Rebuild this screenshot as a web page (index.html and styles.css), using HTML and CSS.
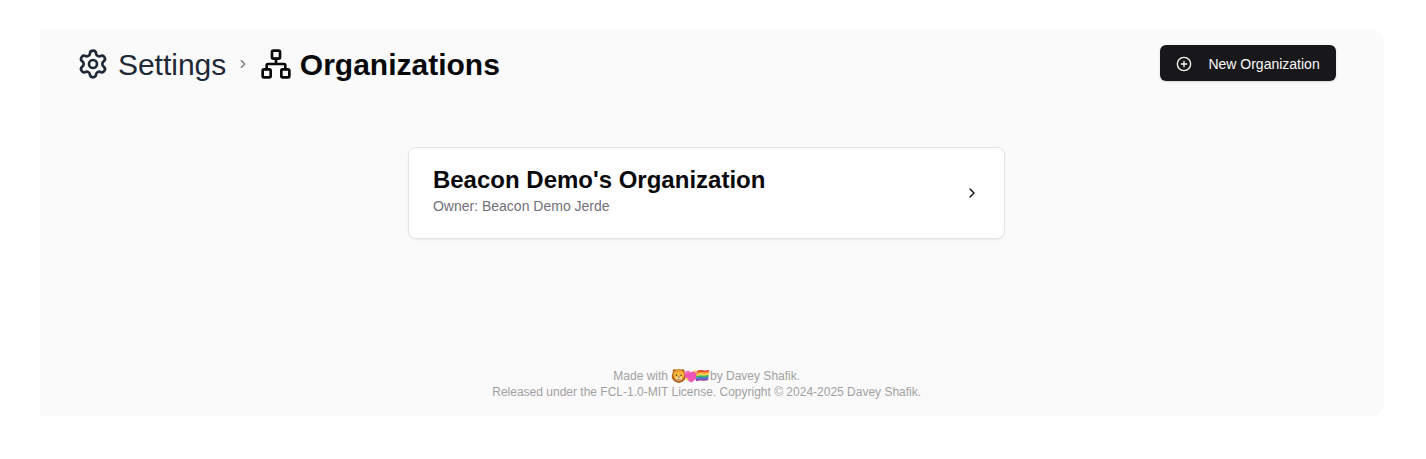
FILE: index.html
```html
<!DOCTYPE html>
<html lang="en">
<head>
<meta charset="utf-8">
<title>Organizations</title>
<link rel="stylesheet" href="styles.css">
</head>
<body>
<div class="panel">
  <header class="header">
    <nav class="crumbs">
      <a class="crumb">
        <svg class="icon-lg" viewBox="0 0 24 24"><path d="M9.671 4.136a2.34 2.34 0 0 1 4.659 0 2.34 2.34 0 0 0 3.319 1.915 2.34 2.34 0 0 1 2.33 4.033 2.34 2.34 0 0 0 0 3.831 2.34 2.34 0 0 1-2.33 4.033 2.34 2.34 0 0 0-3.319 1.915 2.34 2.34 0 0 1-4.659 0 2.34 2.34 0 0 0-3.32-1.915 2.34 2.34 0 0 1-2.33-4.033 2.34 2.34 0 0 0 0-3.831A2.34 2.34 0 0 1 6.35 6.051a2.34 2.34 0 0 0 3.319-1.915"/><circle cx="12" cy="12" r="3"/></svg>
        <span class="crumb-label">Settings</span>
      </a>
      <svg class="separator" viewBox="0 0 24 24"><path d="m9 18 6-6-6-6"/></svg>
      <h1 class="crumb current">
        <svg class="icon-lg" viewBox="0 0 24 24"><rect x="16" y="16" width="6" height="6" rx="1"/><rect x="2" y="16" width="6" height="6" rx="1"/><rect x="9" y="2" width="6" height="6" rx="1"/><path d="M5 16v-3a1 1 0 0 1 1-1h12a1 1 0 0 1 1 1v3M12 12V8"/></svg>
        <span class="crumb-label">Organizations</span>
      </h1>
    </nav>
    <button class="button">
      <svg class="icon-sm" viewBox="0 0 24 24"><circle cx="12" cy="12" r="10"/><path d="M8 12h8M12 8v8"/></svg>
      <span>New Organization</span>
    </button>
  </header>
  <main class="content">
    <article class="card">
      <div class="card-text">
        <h2 class="card-title">Beacon Demo's Organization</h2>
        <p class="card-owner">Owner: Beacon Demo Jerde</p>
      </div>
      <svg class="card-chevron" viewBox="0 0 24 24"><path d="m9 18 6-6-6-6"/></svg>
    </article>
  </main>
  <footer class="footer">
    <p class="made-with"><span>Made with</span>
      <svg class="emoji" viewBox="0 0 39 16">
        <path d="M2.2 1.6Q3.6.7 5 1.6 7.8.4 10.6 1.6q1.6-.9 2.7.2.9 1.2.1 2.4Q15.4 7 14.7 10q-1.6 4-6.9 5Q2.5 14 .9 10 .2 7 2 4.2 1.2 2.7 2.2 1.6z" fill="#b4601f"/>
        <ellipse cx="7.8" cy="7" rx="5.4" ry="5.4" fill="#f8b63c"/>
        <path d="M4 4l1.8-2 2 .8 2-.8 1.8 2z" fill="#eb9a30"/>
        <ellipse cx="7.8" cy="10.4" rx="3.3" ry="2" fill="#fbe0a4"/>
        <circle cx="5.5" cy="7.2" r=".7" fill="#432717"/><circle cx="10.1" cy="7.2" r=".7" fill="#432717"/>
        <path d="M6.6 8.7h2.4l-1.2 1.3z" fill="#5b2c1c"/><path d="M6 11.2q1.8 1 3.6 0" fill="none" stroke="#733c24" stroke-width=".6"/>
        <path d="M20.3 14.6C16 12.3 13.6 9.3 13.7 5.9c.2-3.6 4.6-4.3 6.2-1.2 2-2.6 6.4-1.6 6.5 1.8.1 3.2-2.7 5.8-6.1 8.1z" fill="#ee55b3"/>
        <path d="M15 6c.2-2 2-2.7 3.4-1.4" fill="none" stroke="#fa9bdb" stroke-width="1"/>
        <path d="M23.9 1.2l.6 1.5 1.5.6-1.5.6-.6 1.5-.6-1.5-1.5-.6 1.5-.6zM15.9 9l.6 1.6 1.6.6-1.6.6-.6 1.6-.6-1.6-1.6-.6 1.6-.6z" fill="#ffd052"/>
        <g class="flag">
          <path d="M25.8 3.9q3.2-1.3 6.3-.7t6.1-.7" stroke="#e94235"/>
          <path d="M25.6 5.6q3.2-1.3 6.3-.7t6.1-.7" stroke="#f79327"/>
          <path d="M25.4 7.3q3.2-1.3 6.3-.7t6.1-.7" stroke="#f9d63c"/>
          <path d="M25.2 9q3.2-1.3 6.3-.7t6.1-.7" stroke="#45b652"/>
          <path d="M25 10.7q3.2-1.3 6.3-.7t6.1-.7" stroke="#397fda"/>
          <path d="M24.8 12.4q3.2-1.3 6.3-.7t6.1-.7" stroke="#8d43ae"/>
        </g>
      </svg>
      <span>by Davey Shafik.</span></p>
    <p>Released under the FCL-1.0-MIT License. Copyright © 2024-2025 Davey Shafik.</p>
  </footer>
</div>
</body>
</html>
```
FILE: styles.css
```css
* { box-sizing: border-box; }
body {
  margin: 0;
  padding: 30px 42px 43px 40px;
  height: 459px;
  background: #fff;
  color: #09090b;
  font-family: "Liberation Sans", Arial, sans-serif;
}
h1, h2, p { margin: 0; }
svg {
  flex: none;
  fill: none;
  stroke: currentColor;
  stroke-width: 2;
  stroke-linecap: round;
  stroke-linejoin: round;
}
.panel {
  display: flex;
  flex-direction: column;
  height: 386px;
  padding: 15.4px 48px 16px 37.4px;
  border-radius: 0 12px 12px 0;
  background: #fafafa;
}
.header {
  display: flex;
  align-items: flex-start;
  justify-content: space-between;
}
.crumbs { display: flex; align-items: center; padding-top: 1px; }
.crumb {
  display: flex;
  align-items: center;
  gap: 8.5px;
  color: #1f2937;
  font-size: 30px;
  font-weight: 400;
  line-height: 36px;
}
.crumb-label { padding-top: 1px; line-height: 35px; }
.current { gap: 8px; color: #09090b; font-weight: 700; }
.icon-lg { width: 32px; height: 32px; }
.separator { width: 14px; height: 14px; margin: 0 10px 0 9.5px; color: #71717a; }
.button {
  display: flex;
  align-items: center;
  gap: 16px;
  width: 175.6px;
  height: 36px;
  padding: 1px 16px 0;
  border: 0;
  border-radius: 6px;
  background: #18181b;
  color: #fafafa;
  font: 400 14px/20px "Liberation Sans", Arial, sans-serif;
  white-space: nowrap;
  box-shadow: 0 1px 2px rgba(0, 0, 0, .15);
}
.icon-sm { width: 16px; height: 16px; }
.content { display: flex; flex: 1; justify-content: center; padding-top: 64.6px; }
.card {
  display: flex;
  align-items: center;
  justify-content: space-between;
  width: 597.5px;
  height: 92px;
  padding: 0 24px;
  border: 1px solid #e4e4e7;
  border-radius: 8px;
  background: #fff;
  box-shadow: 0 1px 2px rgba(0, 0, 0, .06);
}
.card-text { padding-bottom: 6px; }
.card-title { font-size: 24px; line-height: 32px; }
.card-owner { color: #71717a; font-size: 14px; line-height: 20px; }
.card-chevron { width: 16px; height: 16px; }
.footer { color: #a1a1a1; font-size: 12px; line-height: 16px; text-align: center; }
.made-with { display: flex; justify-content: center; }
.emoji { width: 39px; height: 16px; margin-left: 3px; stroke: none; }
.flag { stroke-width: 1.8; stroke-linecap: butt; }
```
